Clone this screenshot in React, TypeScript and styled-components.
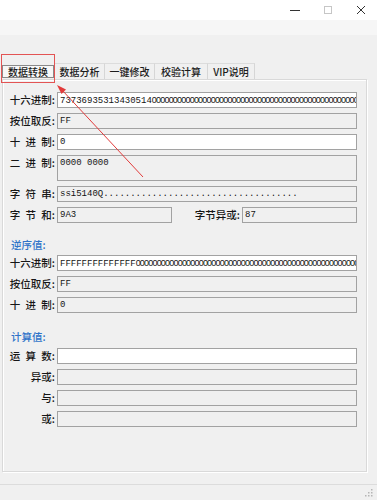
import React from 'react';
import styled, {createGlobalStyle} from 'styled-components';

const GlobalStyle = createGlobalStyle`
  html, body {
    margin: 0;
    padding: 0;
    background: #f0f0f0;
  }
  body {
    font-family: "Noto Sans CJK SC", "Noto Sans", sans-serif;
  }
`;

const Window = styled.div`
  position: relative;
  width: 377px;
  height: 500px;
  overflow: hidden;
  display: flex;
  flex-direction: column;
  background: #f0f0f0;
`;

const TitleBar = styled.div`
  height: 20px;
  background: #ffffff;
  display: flex;
  justify-content: flex-end;
  align-items: center;
`;

const CaptionButton = styled.div`
  width: 33px;
  height: 20px;
  display: flex;
  align-items: center;
  justify-content: center;
`;

const MenuBand = styled.div`
  height: 15px;
  background: #f6f6f6;
`;

const TabArea = styled.div`
  padding-top: 28px;
  display: flex;
  flex-direction: column;
`;

const TabRow = styled.div`
  display: flex;
  height: 16px;
  margin-left: 2px;
  align-items: stretch;
`;

const Tab = styled.div<{$width: number; $active?: boolean}>`
  width: ${props => props.$width}px;
  box-sizing: border-box;
  display: flex;
  align-items: center;
  justify-content: center;
  font-size: 10px;
  font-weight: 500;
  color: #1c1c1c;
  border-top: 1px solid ${props => props.$active ? 'transparent' : '#dcdcdc'};
  border-right: 1px solid #d6d6d6;
  background: #f0f0f0;

  span {
    box-sizing: border-box;
    height: 13px;
    line-height: 11px;
    padding: 0 ${props => props.$active ? 4 : 0}px;
    border: 1px solid ${props => props.$active ? '#8a8a8a' : 'transparent'};
    background: ${props => props.$active ? '#f7f7f7' : 'transparent'};
    width: ${props => props.$active ? '100%' : 'auto'};
    text-align: center;
  }
`;

const Panel = styled.div`
  box-sizing: border-box;
  width: 365px;
  height: 393px;
  margin-left: 2px;
  border: 1px solid #d9d9d9;
  box-shadow: 1px 1px 0 #ffffff, inset 1px 1px 0 #ffffff;
  padding: 12px 9px 0 0;
  display: flex;
  flex-direction: column;
`;

const Form = styled.div`
  display: flex;
  flex-direction: column;
  gap: 5px;
`;

const Row = styled.div<{$top?: boolean}>`
  display: flex;
  align-items: ${props => props.$top ? 'flex-start' : 'center'};
`;

const Label = styled.div<{$width?: number; $offset?: number}>`
  width: ${props => props.$width ?? 54}px;
  flex-shrink: 0;
  margin-top: ${props => props.$offset ?? 0}px;
  padding-right: 2px;
  box-sizing: border-box;
  text-align: right;
  font-size: 10.5px;
  font-weight: 500;
  line-height: 12px;
  color: #161616;
  white-space: pre;
`;

const Field = styled.div<{$white?: boolean; $tall?: boolean; $width?: number}>`
  box-sizing: border-box;
  ${props => props.$width ? `width: ${props.$width}px;` : 'flex: 1;'}
  height: ${props => props.$tall ? 26 : 16}px;
  border: 1px solid #a2a2a2;
  background: ${props => props.$white ? '#ffffff' : '#f0f0f0'};
  padding: ${props => props.$tall ? '2px' : '0'} 0 0 2px;
  overflow: hidden;
  white-space: nowrap;
  font-family: "Liberation Mono", monospace;
  font-size: 9px;
  line-height: ${props => props.$tall ? 10 : 14}px;
  color: #141414;
`;

const Zeros = styled.span`
  font-family: "Liberation Sans", sans-serif;
  font-size: 9px;
  letter-spacing: -0.8px;
`;

const SectionTitle = styled.div<{$top: number; $bottom: number}>`
  margin: ${props => props.$top}px 0 ${props => props.$bottom}px 8px;
  font-size: 10.5px;
  font-weight: 500;
  line-height: 12px;
  color: #2f73c9;
`;

const Divider = styled.div`
  margin-top: 12px;
  height: 1px;
  background: #dcdcdc;
`;

const StatusBar = styled.div`
  flex: 1;
  display: flex;
  justify-content: flex-end;
  align-items: flex-end;
  padding: 0 4px 3px 0;
`;

const Highlight = styled.div`
  position: absolute;
  left: 1px;
  top: 54px;
  width: 54px;
  height: 29px;
  box-sizing: border-box;
  border: 1px solid #e35454;
  pointer-events: none;
`;

const ArrowLayer = styled.svg`
  position: absolute;
  left: 0;
  top: 0;
  pointer-events: none;
`;

const zeros = (n: number) => '0'.repeat(n);

const App = () => {
  return (
    <Window>
      <GlobalStyle/>
      <TitleBar>
        <CaptionButton>
          <svg width="10" height="10" viewBox="0 0 10 10">
            <line x1="0" y1="5.5" x2="10" y2="5.5" stroke="#333" strokeWidth="1"/>
          </svg>
        </CaptionButton>
        <CaptionButton>
          <svg width="10" height="10" viewBox="0 0 10 10">
            <rect x="1.5" y="1.5" width="7" height="7" fill="none" stroke="#c6c6c6" strokeWidth="1"/>
          </svg>
        </CaptionButton>
        <CaptionButton>
          <svg width="10" height="10" viewBox="0 0 10 10">
            <path d="M1 1 L9 9 M9 1 L1 9" stroke="#333" strokeWidth="1"/>
          </svg>
        </CaptionButton>
      </TitleBar>
      <MenuBand/>
      <TabArea>
        <TabRow>
          <Tab $width={53} $active><span>数据转换</span></Tab>
          <Tab $width={50}><span>数据分析</span></Tab>
          <Tab $width={50}><span>一键修改</span></Tab>
          <Tab $width={53}><span>校验计算</span></Tab>
          <Tab $width={47}><span>VIP说明</span></Tab>
        </TabRow>
        <Panel>
          <Form>
            <Row>
              <Label>十六进制:</Label>
              <Field $white>73736935313430514<Zeros>{zeros(58)}</Zeros></Field>
            </Row>
            <Row>
              <Label>按位取反:</Label>
              <Field>FF</Field>
            </Row>
            <Row>
              <Label>{'十\u2002进\u2002制:'}</Label>
              <Field $white>0</Field>
            </Row>
            <Row $top>
              <Label $offset={2}>{'二\u2002进\u2002制:'}</Label>
              <Field $tall>0000 0000</Field>
            </Row>
            <Row>
              <Label>{'字\u2002符\u2002串:'}</Label>
              <Field>{'ssi5140Q' + '.'.repeat(36)}</Field>
            </Row>
            <Row>
              <Label>{'字\u2002节\u2002和:'}</Label>
              <Field $width={115}>9A3</Field>
              <Label $width={70}>字节异或:</Label>
              <Field>87</Field>
            </Row>
          </Form>

          <SectionTitle $top={16} $bottom={4}>逆序值:</SectionTitle>
          <Form>
            <Row>
              <Label>十六进制:</Label>
              <Field $white>FFFFFFFFFFFFFF<Zeros>{zeros(58)}</Zeros></Field>
            </Row>
            <Row>
              <Label>按位取反:</Label>
              <Field>FF</Field>
            </Row>
            <Row>
              <Label>{'十\u2002进\u2002制:'}</Label>
              <Field>0</Field>
            </Row>
          </Form>

          <SectionTitle $top={18} $bottom={5}>计算值:</SectionTitle>
          <Form>
            <Row>
              <Label>{'运\u2002算\u2002数:'}</Label>
              <Field $white/>
            </Row>
            <Row>
              <Label>异或:</Label>
              <Field/>
            </Row>
            <Row>
              <Label>与:</Label>
              <Field/>
            </Row>
            <Row>
              <Label>或:</Label>
              <Field/>
            </Row>
          </Form>
        </Panel>
      </TabArea>
      <Divider/>
      <StatusBar>
        <svg width="8" height="8" viewBox="0 0 8 8">
          <g fill="#b5b5b5">
            <rect x="6" y="0" width="1.5" height="1.5"/>
            <rect x="3" y="3" width="1.5" height="1.5"/>
            <rect x="6" y="3" width="1.5" height="1.5"/>
            <rect x="0" y="6" width="1.5" height="1.5"/>
            <rect x="3" y="6" width="1.5" height="1.5"/>
            <rect x="6" y="6" width="1.5" height="1.5"/>
          </g>
        </svg>
      </StatusBar>

      <Highlight/>
      <ArrowLayer width="377" height="500" viewBox="0 0 377 500">
        <line x1="143" y1="177" x2="62" y2="90" stroke="#e23b3b" strokeWidth="1"/>
        <polygon points="57,85 66,89.5 61.5,94" fill="#e23b3b"/>
      </ArrowLayer>
    </Window>
  );
};

export default App;
